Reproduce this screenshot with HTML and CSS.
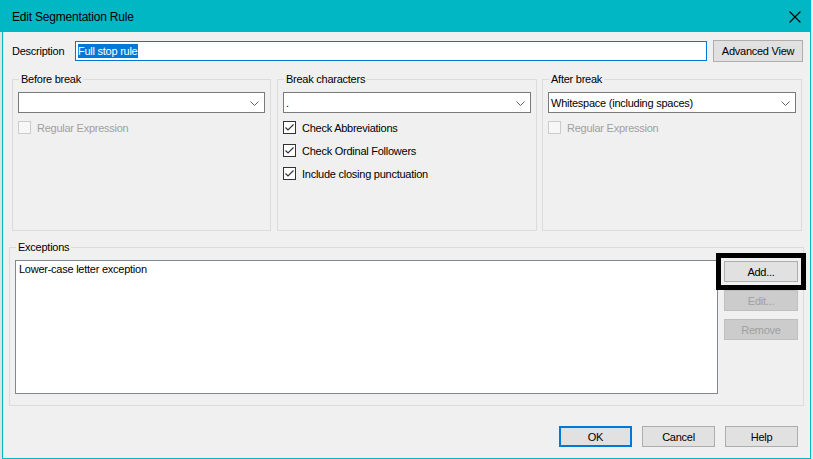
FILE: index.html
```html
<!DOCTYPE html>
<html>
<head>
<meta charset="utf-8">
<link rel="stylesheet" href="styles.css">
</head>
<body>
<div class="screen">
  <div class="titlebar">
    <span class="title">Edit Segmentation Rule</span>
    <svg class="close" width="12" height="12" viewBox="0 0 12 12"><path d="M0.5 0.5 L11.5 11.5 M11.5 0.5 L0.5 11.5" stroke="#000" stroke-width="1.1" fill="none"/></svg>
  </div>
  <div class="frame">
    <div class="strip"></div>
    <div class="client">
      <div class="desc-row">
        <span class="desc-label">Description</span>
        <div class="textbox"><span class="sel">Full stop rule</span></div>
        <button class="btn adv">Advanced View</button>
      </div>

      <div class="groups">
        <div class="group g1">
          <span class="legend">Before break</span>
          <div class="combo"><span class="combo-text"></span><svg class="chev" width="9" height="5" viewBox="0 0 9 5"><path d="M0.5 0.5 L4.5 4.5 L8.5 0.5" stroke="#606060" fill="none"/></svg></div>
          <div class="check disabled"><span class="box"></span><span class="lbl">Regular Expression</span></div>
        </div>
        <div class="group g2">
          <span class="legend">Break characters</span>
          <div class="combo"><span class="combo-text">.</span><svg class="chev" width="9" height="5" viewBox="0 0 9 5"><path d="M0.5 0.5 L4.5 4.5 L8.5 0.5" stroke="#606060" fill="none"/></svg></div>
          <div class="check"><span class="box"><svg width="11" height="11" viewBox="0 0 11 11"><path d="M1.5 5.5 L4 8 L9.5 2.5" stroke="#333" stroke-width="1.2" fill="none"/></svg></span><span class="lbl">Check Abbreviations</span></div>
          <div class="check"><span class="box"><svg width="11" height="11" viewBox="0 0 11 11"><path d="M1.5 5.5 L4 8 L9.5 2.5" stroke="#333" stroke-width="1.2" fill="none"/></svg></span><span class="lbl">Check Ordinal Followers</span></div>
          <div class="check"><span class="box"><svg width="11" height="11" viewBox="0 0 11 11"><path d="M1.5 5.5 L4 8 L9.5 2.5" stroke="#333" stroke-width="1.2" fill="none"/></svg></span><span class="lbl">Include closing punctuation</span></div>
        </div>
        <div class="group g3">
          <span class="legend">After break</span>
          <div class="combo"><span class="combo-text">Whitespace (including spaces)</span><svg class="chev" width="9" height="5" viewBox="0 0 9 5"><path d="M0.5 0.5 L4.5 4.5 L8.5 0.5" stroke="#606060" fill="none"/></svg></div>
          <div class="check disabled"><span class="box"></span><span class="lbl">Regular Expression</span></div>
        </div>
      </div>

      <div class="group exceptions">
        <span class="legend">Exceptions</span>
        <div class="exc-body">
          <div class="listbox"><div class="item">Lower-case letter exception</div></div>
          <div class="exc-buttons">
            <button class="btn side highlight">Add...</button>
            <button class="btn side off">Edit...</button>
            <button class="btn side off">Remove</button>
          </div>
        </div>
      </div>

      <div class="footer">
        <button class="btn foot ok">OK</button>
        <button class="btn foot">Cancel</button>
        <button class="btn foot">Help</button>
      </div>
    </div>
  </div>
</div>
</body>
</html>
```

FILE: styles.css
```css
* { box-sizing: border-box; }
html, body { margin: 0; padding: 0; }
body {
  width: 813px;
  height: 459px;
  overflow: hidden;
  background: #ececec;
  font-family: "Liberation Sans", Arial, sans-serif;
  font-size: 11px;
  letter-spacing: -0.25px;
  color: #000;
}
.screen { width: 811px; }
.titlebar {
  height: 32px;
  background: #00b7c3;
  display: flex;
  align-items: center;
  justify-content: space-between;
  padding: 1px 10px 0 12px;
}
.title {
  font-family: "Liberation Sans", Arial, sans-serif;
  font-size: 12px;
  letter-spacing: -0.2px;
  color: #000;
}
.close { display: block; margin-top: 1px; }
.frame { display: flex; }
.strip { width: 2px; height: 427px; background: #e2e2e2; }
.client {
  width: 809px;
  height: 427px;
  background: #f0f0f0;
  border: 1px solid #00b7c3;
  border-top: none;
}
.desc-row {
  display: flex;
  align-items: center;
  height: 22px;
  margin: 8px 0 0 9px;
}
.desc-label { width: 63px; }
.textbox {
  width: 632px;
  height: 20px;
  border: 1px solid #0078d7;
  background: #fff;
  display: flex;
  align-items: center;
  padding-left: 2px;
}
.sel {
  background: #0078d7;
  color: #fff;
  line-height: 14px;
  padding: 0 1px 0 0;
}
.btn {
  font-family: "Liberation Sans", Arial, sans-serif;
  font-size: 11px;
  letter-spacing: -0.25px;
  color: #000;
  background: #e1e1e1;
  border: 1px solid #adadad;
  padding: 0;
  margin: 0;
  display: block;
}
.adv { width: 90px; height: 22px; margin-left: 6px; }
.groups {
  display: flex;
  margin: 17px 0 0 9px;
}
.group {
  border: 1px solid #dcdcdc;
  padding: 0 5px;
}
.g1 { width: 259px; height: 152px; }
.g2 { width: 260px; height: 152px; margin-left: 6px; }
.g3 { width: 260px; height: 152px; margin-left: 5px; }
.legend {
  display: block;
  width: max-content;
  height: 13px;
  line-height: 13px;
  margin: -7px 0 0 1px;
  padding: 0 2px;
  background: #f0f0f0;
}
.combo {
  margin-top: 6px;
  height: 21px;
  border: 1px solid #7a7a7a;
  background: #fff;
  display: flex;
  align-items: center;
  justify-content: space-between;
  padding: 0 5px 0 2px;
}
.chev { display: block; margin-top: 1px; }
.check {
  display: flex;
  align-items: center;
  height: 17px;
  margin-top: 6px;
}
.box {
  width: 13px;
  height: 13px;
  border: 1px solid #333;
  background: #fff;
  display: flex;
  align-items: center;
  justify-content: center;
}
.box svg { display: block; }
.lbl { margin-left: 6px; }
.check.disabled .box { border-color: #cccccc; background: #f7f7f7; }
.check.disabled .lbl { color: #a0a0a0; }
.exceptions {
  width: 795px;
  height: 159px;
  margin: 16px 0 0 6px;
}
.exc-body {
  display: flex;
  margin-top: 6px;
}
.listbox {
  width: 703px;
  height: 134px;
  border: 1px solid #828790;
  background: #fff;
  padding: 2px 0 0 3px;
}
.item { line-height: 13px; }
.exc-buttons {
  display: flex;
  flex-direction: column;
  gap: 8px;
  margin: 1px 0 0 6px;
}
.side { width: 74px; height: 21px; }
.highlight { outline: 5px solid #000; outline-offset: 3px; }
.off { background: #cccccc; border-color: #bfbfbf; color: #a0a0a0; }
.footer {
  display: flex;
  justify-content: flex-end;
  gap: 10px;
  margin: 20px 12px 0 0;
}
.foot { width: 73px; height: 21px; }
.ok { border: 2px solid #0078d7; }
```
